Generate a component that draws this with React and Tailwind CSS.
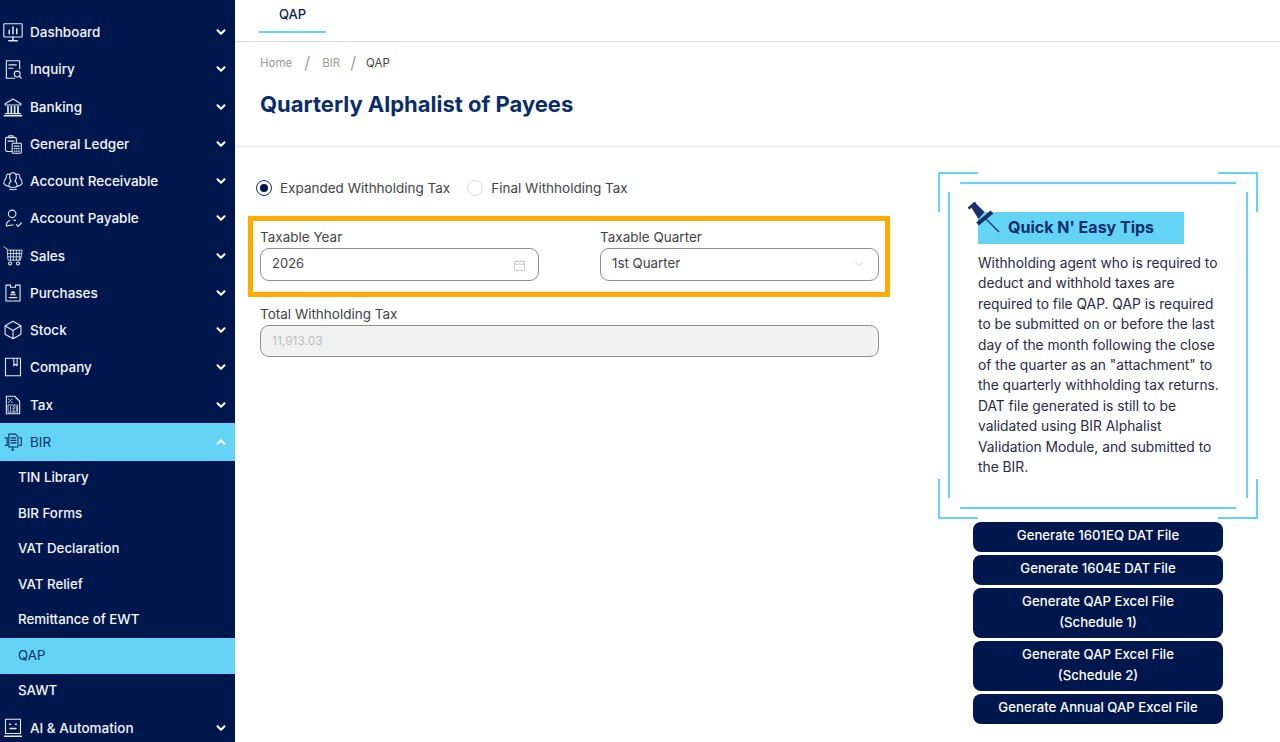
import React from 'react';
import { ChevronDown, ChevronUp } from 'lucide-react';

const S = ({ children, vb = '0 0 24 24', cls = 'w-[20px] h-[20px]' }) => (
  <svg viewBox={vb} className={cls} fill="none" stroke="currentColor" strokeWidth="1.3" strokeLinecap="round" strokeLinejoin="round">{children}</svg>
);

const icons = {
  dash: <S><rect x="1" y="2" width="22" height="16" rx="0.5" /><path d="M12 18v4M7 22.5h10M7.500 14v-4M12 14V6M16.500 14v-6" strokeWidth="1.800" /></S>,
  inquiry: <S><path d="M20 12V2H4v21h10" /><path d="M7 7h9M7 11h5" /><circle cx="17" cy="18" r="3.500" /><path d="M20 21l2 2" /></S>,
  bank: <S><path d="M2.500 8l9.500-5.500L21.500 8v1.500h-19z" /><path d="M6 11.500v7M10 11.500v7M14 11.500v7M18 11.500v7" strokeWidth="2" /><path d="M3 20h18M1.500 22.500h21" strokeWidth="1.600" /></S>,
  ledger: <S><rect x="3" y="4" width="13" height="17" rx="2" /><path d="M7 4.500V2h5v2.500zM6 8.500h7" /><rect x="11" y="11" width="11" height="12" rx="1" fill="#00174d" /><path d="M13.500 14.500h6M13.500 17.500h1M16 17.500h1M18.500 17.500h1M13.500 20.500h1M16 20.500h1M18.500 20.500h1" /></S>,
  ar: <S><path d="M8 7.500C8 3.500 10 2 12 2s4 1.500 4 5.500c0 2-1 3.500-1.500 4.500M8 7.500c0 2 1 3.500 1.500 4.500" /><path d="M8 4C5 3 3.500 5 4 8c-2 2-3 5-3 7 2 3 4 3 6 3.500 3 1.500 7 1.500 10 0 2-.5 4-.5 6-3.500 0-2-1-5-3-7 .5-3-1-5-4-4" /><path d="M7 18.500c-.5-3 1-5 2.500-6.500M17 18.500c.5-3-1-5-2.500-6.500M8 22c2.500.6 5.500.6 8 0" /></S>,
  ap: <S><circle cx="11" cy="7" r="4.500" /><path d="M4 21c0-3 1.500-5 4-6M13 14.500c1 0 1.500.2 2 .5M4 21.500c3 0 5-1.500 8-1M16 20l2 2 4-4" /></S>,
  sales: <S><path d="M1 1l4 2.500 1 13.500h15l2-12H5.300M9 5v12M12.500 5v12M16 5v12M19.500 5v12M5.500 9h17M5.800 13h16" strokeWidth="1" /><circle cx="8.500" cy="21" r="1.800" /><circle cx="18" cy="21" r="1.800" /></S>,
  purch: <S><path d="M9 2.500H3.500v19h17v-19H15v2.500H9z" /><path d="M7.500 17.500h9M9 14h6M12 10l2 2h-4z" /></S>,
  stock: <S><path d="M12 1.500l9.500 5.500v10L12 22.500 2.500 17V7zM2.500 7L12 12.500 21.500 7M12 12.500v10" /></S>,
  company: <S><rect x="3" y="1.500" width="18" height="21" /><path d="M13 1.500v9l2-1.800 2 1.800v-9" /></S>,
  tax: <S><path d="M4 1.500h10l6 6v15H4z" /><path d="M6.500 9L11 4.500M6.500 5h1M10 8.500h1" strokeWidth="1.100" /><rect x="6.500" y="12" width="11" height="8.500" strokeWidth="1" /><path d="M9 14v5M12 14h2v2h-2v3h2M16 14v5" strokeWidth="0.900" /></S>,
  bir: <S><path d="M7 18V2.500h8l3 3V18zM2.500 7H5v9H2.500M20 7h2v9h-2" /><path d="M9.500 7h6M9.500 10h6M9.500 13h6" strokeWidth="1.500" /><path d="M10 21.500h3M11.500 18v3" /></S>,
  ai: <S><rect x="3" y="1.500" width="18" height="17" /><path d="M8 7.500h1M15 7.500h1M8.500 12.500h7M2 22h20" strokeWidth="1.800" /></S>,
};

const before = [
  ['Dashboard', 'dash'], ['Inquiry', 'inquiry'], ['Banking', 'bank'], ['General Ledger', 'ledger'],
  ['Account Receivable', 'ar'], ['Account Payable', 'ap'], ['Sales', 'sales'], ['Purchases', 'purch'],
  ['Stock', 'stock'], ['Company', 'company'], ['Tax', 'tax'],
];
const subs = ['TIN Library', 'BIR Forms', 'VAT Declaration', 'VAT Relief', 'Remittance of EWT', 'QAP', 'SAWT'];

const Row = ({ label, icon, active }) => (
  <div className={`h-[37.25px] flex items-center pl-[3px] pr-[7px] shrink-0 ${active ? 'bg-[#63d4f5]' : ''}`}>
    <span className={`w-[20px] h-[20px] flex items-center justify-center ${active ? 'text-[#0a2d6b]' : 'text-[#e6ecf5]'}`}>{icons[icon]}</span>
    <span className={`ml-[7px] flex-1 text-[13.5px] whitespace-nowrap ${active ? 'font-normal text-[#0a2d6b]' : 'font-medium text-[#f3f6fb]'}`}>{label}</span>
    {active ? <ChevronUp size={14} strokeWidth={3.5} className="text-white" /> : <ChevronDown size={14} strokeWidth={3.5} className="text-white" />}
  </div>
);

const tips = [
  'Withholding agent who is required to',
  'deduct and withhold taxes are',
  'required to file QAP. QAP is required',
  'to be submitted on or before the last',
  'day of the month following the close',
  'of the quarter as an "attachment" to',
  'the quarterly withholding tax returns.',
  'DAT file generated is still to be',
  'validated using BIR Alphalist',
  'Validation Module, and submitted to',
  'the BIR.',
];

const Btn = ({ lines }) => (
  <button className={`w-[250px] rounded-[8px] bg-[#00174d] text-white text-[13.2px] font-medium leading-[20.5px] pt-[3px] text-center flex flex-col items-center justify-start ${lines.length > 1 ? 'h-[50px]' : 'h-[30px]'}`}>
    {lines.map((l) => <span key={l} className="block whitespace-nowrap">{l}</span>)}
  </button>
);

export default function App() {
  return (
    <div className="w-[1280px] h-[742px] overflow-hidden flex bg-white" style={{ fontFamily: 'Inter, "Noto Sans", sans-serif' }}>
      <aside className="w-[235px] h-full bg-[#00174d] shrink-0 flex flex-col pt-[13.5px] overflow-hidden">
        {before.map(([l, i]) => <Row key={l} label={l} icon={i} />)}
        <Row label="BIR" icon="bir" active />
        {subs.map((s) => (
          <div key={s} className={`h-[35.5px] shrink-0 flex items-center pl-[18px] pb-[0.4px] text-[13.3px] ${s === 'QAP' ? 'bg-[#63d4f5] text-[#0a2d6b] font-normal' : 'text-[#f3f6fb] font-medium'}`}>{s}</div>
        ))}
        <Row label="AI & Automation" icon="ai" />
      </aside>

      <main className="flex-1 flex flex-col min-w-0">
        <div className="h-[42px] border-b border-[#dcdcdc] pl-[24px] shrink-0">
          <div className="w-[67px] h-[33px] border-b-2 border-[#63d4f5] flex items-start justify-center pt-[4px] text-[13px] font-medium text-[#0b1f4d] leading-[20px]">QAP</div>
        </div>
        <div className="h-[103px] pl-[25px] shrink-0">
          <div className="flex items-center h-[20px] mt-[12px] text-[11.5px] text-[#9a9a9a]">
            <span>Home</span>
            <span className="ml-[12px] text-[17px] font-light text-[#8a8a8a]">/</span>
            <span className="ml-[12px]">BIR</span>
            <span className="ml-[10px] text-[17px] font-light text-[#8a8a8a]">/</span>
            <span className="ml-[10px] text-[#444]">QAP</span>
          </div>
          <h1 className="mt-[15px] text-[22px] leading-[30px] font-bold text-[#0a2d6b] whitespace-nowrap">Quarterly Alphalist of Payees</h1>
        </div>
        <div className="h-[3px] bg-[#f3f3f3] shrink-0" />

        <div className="flex flex-1 min-h-0">
          <div className="w-[703px] shrink-0 pl-[13px] pt-[32px]">
            <div className="flex items-center pl-[8px] h-[16px] text-[13.5px] text-[#444]">
              <span className="w-[16px] h-[16px] rounded-full border-[1.5px] border-[#0a2d6b] flex items-center justify-center">
                <span className="w-[8px] h-[8px] rounded-full bg-[#00174d]" />
              </span>
              <span className="ml-[8px] pt-[1px]">Expanded Withholding Tax</span>
              <span className="ml-[17px] w-[16px] h-[16px] rounded-full border border-[#dcdcdc]" />
              <span className="ml-[8px] pt-[1px]">Final Withholding Tax</span>
            </div>
            <div className="mt-[20px] w-[642px] h-[81px] border-[5px] border-[#ffab00] pl-[7px] pr-[6px] flex gap-[61px]">
              <div className="w-[279px]">
                <label className="block mt-[7px] text-[13.5px] leading-[18px] text-[#444]">Taxable Year</label>
                <div className="mt-[2px] h-[33px] rounded-[9px] border border-[#8f8f8f] flex items-center justify-between pl-[11px] pr-[12px] pb-[1px] text-[13px] text-[#444]">
                  <span>2026</span>
                  <svg viewBox="0 0 14 14" className="w-[13px] h-[13px] mt-[2px] text-[#c4c4c4]" fill="none" stroke="currentColor"><rect x="1.500" y="2.500" width="11" height="10" /><path d="M1.500 5.500h11M4.500 1v2.500M9.500 1v2.500" /></svg>
                </div>
              </div>
              <div className="w-[279px]">
                <label className="block mt-[7px] text-[13.5px] leading-[18px] text-[#444]">Taxable Quarter</label>
                <div className="mt-[2px] h-[33px] rounded-[9px] border border-[#8f8f8f] flex items-center justify-between pl-[11px] pr-[12px] pb-[1px] text-[13.3px] text-[#444]">
                  <span>1st Quarter</span>
                  <ChevronDown size={14} strokeWidth={1} className="text-[#b5b5b5]" />
                </div>
              </div>
            </div>
            <div className="ml-[12px] w-[619px] mt-[8px]">
              <label className="block text-[13.5px] leading-[18px] text-[#444]">Total Withholding Tax</label>
              <div className="mt-[2px] h-[32px] rounded-[9px] border border-[#8f8f8f] bg-[#f2f2f2] flex items-center pl-[11px] text-[12px] text-[#bdbdbd]">11,913.03</div>
            </div>
          </div>

          <div className="flex flex-col pt-[24px] w-[320px]">
            <div className="relative w-[320px] h-[347px] pl-[40px] pt-[40px] shrink-0">
              <span className="absolute left-0 top-0 w-[40px] h-[40px] border-l-2 border-t-2 border-[#63d4f5]" />
              <span className="absolute right-0 top-0 w-[40px] h-[40px] border-r-2 border-t-2 border-[#63d4f5]" />
              <span className="absolute left-0 bottom-0 w-[40px] h-[40px] border-l-2 border-b-2 border-[#63d4f5]" />
              <span className="absolute right-0 bottom-0 w-[40px] h-[40px] border-r-2 border-b-2 border-[#63d4f5]" />
              <span className="absolute left-[22px] top-[10px] w-[276px] h-[2px] bg-[#63d4f5]" />
              <span className="absolute left-[22px] bottom-[10px] w-[276px] h-[2px] bg-[#63d4f5]" />
              <span className="absolute left-[10px] top-[20px] w-[2px] h-[306px] bg-[#63d4f5]" />
              <span className="absolute right-[10px] top-[20px] w-[2px] h-[306px] bg-[#63d4f5]" />

              <div className="relative w-[206px] h-[32px] bg-[#63d4f5] flex items-center pl-[30px] pb-[2px] text-[16px] font-bold text-[#0a2d6b] whitespace-nowrap">
                Quick N' Easy Tips
                <svg viewBox="0 0 32 32" className="absolute left-[-10px] top-[-10px] w-[32px] h-[32px]">
                  <path d="M0.500 6.500L7.500 0.500" stroke="#1b2f6b" strokeWidth="2.600" />
                  <path d="M3 5l5-3.500 8.500 8.500-6 7z" fill="#1b2f6b" />
                  <path d="M9.500 22L24 10" stroke="#1b2f6b" strokeWidth="4.200" />
                  <path d="M17 16L31 30" stroke="#1b2f6b" strokeWidth="1.300" />
                </svg>
              </div>
              <div className="mt-[9px] text-[13.8px] leading-[20.4px] text-[#2b2b40]">
                {tips.map((t) => <span key={t} className="block whitespace-nowrap">{t}</span>)}
              </div>
            </div>
            <div className="ml-[35px] mt-[3px] flex flex-col gap-[3px]">
              <Btn lines={['Generate 1601EQ DAT File']} />
              <Btn lines={['Generate 1604E DAT File']} />
              <Btn lines={['Generate QAP Excel File', '(Schedule 1)']} />
              <Btn lines={['Generate QAP Excel File', '(Schedule 2)']} />
              <Btn lines={['Generate Annual QAP Excel File']} />
            </div>
          </div>
        </div>
      </main>
    </div>
  );
}
